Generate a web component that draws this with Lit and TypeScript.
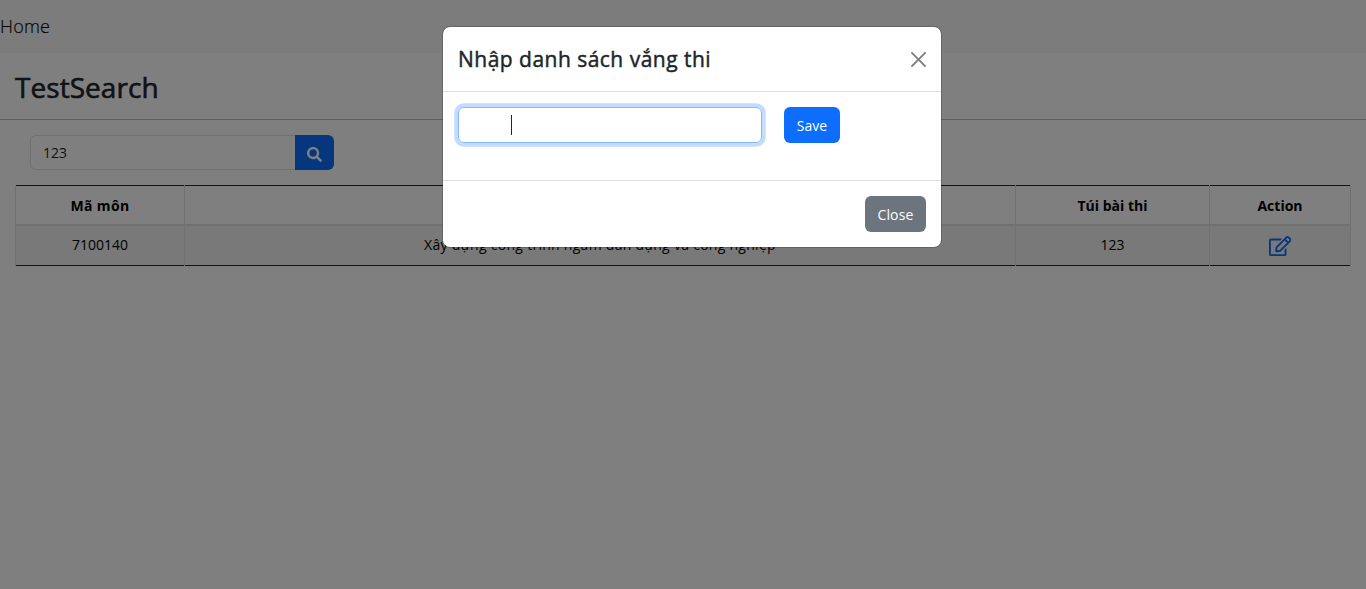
import { LitElement, html, css } from "lit";
import { customElement, state } from "lit/decorators.js";

interface Row {
  code: string;
  name: string;
  bag: string;
}

@customElement("app-root")
export class AppRoot extends LitElement {
  @state() private keyword = "123";
  @state() private rows: Row[] = [
    { code: "7100140", name: "Xây dựng công trình ngầm dân dụng và công nghiệp", bag: "123" },
  ];

  static styles = css`
    :host {
      display: block;
      position: relative;
      height: 589px;
      overflow: hidden;
      background: #fff;
      color: #212529;
      font: 14px/22px "Open Sans", "Noto Sans", sans-serif;
    }
    * { box-sizing: border-box; }
    .nav {
      display: flex;
      align-items: center;
      height: 53px;
      padding-bottom: 2px;
      background: #f8f9fa;
      font-size: 18px;
      font-weight: 300;
      letter-spacing: 0.2px;
      color: #000;
      -webkit-text-stroke: 0.15px currentColor;
    }
    .title {
      display: flex;
      align-items: center;
      height: 67px;
      padding: 2px 0 0 15px;
      border-bottom: 1px solid #bcbdbe;
      margin: 0;
      font-size: 28px;
      line-height: 34px;
      font-weight: 500;
      letter-spacing: 0.05px;
      -webkit-text-stroke: 0.6px currentColor;
    }
    .title span, .heading span { display: block; }
    .search {
      display: flex;
      width: 304px;
      height: 35px;
      margin: 15px 0 15px 30px;
    }
    .field {
      flex: 1;
      display: flex;
      align-items: center;
      padding: 0 12px;
      border: 1px solid #dee2e6;
      border-right: 0;
      border-radius: 6px 0 0 6px;
    }
    .go {
      display: flex;
      align-items: center;
      justify-content: center;
      width: 39px;
      padding: 3px 0 0;
      border: 0;
      border-radius: 0 6px 6px 0;
      background: #0d6efd;
      color: #fff;
    }
    .grid {
      display: grid;
      grid-template-columns: 169px 831px 194px 142px;
      width: 1336px;
      margin-left: 15px;
      color: #000;
      text-align: center;
    }
    .cell {
      display: flex;
      align-items: center;
      justify-content: center;
      border-left: 1px solid #dee2e6;
    }
    .cell:nth-child(4n) { border-right: 1px solid #dee2e6; }
    .head {
      height: 41px;
      font-weight: 700;
      background: linear-gradient(#212529, #212529) 0 0 / 100% 1px no-repeat,
        linear-gradient(#dee2e6, #dee2e6) 0 100% / 100% 2px no-repeat;
      background-origin: padding-box;
      background-clip: padding-box;
    }
    .body {
      height: 40px;
      padding-bottom: 2px;
      background: linear-gradient(#212529, #212529) 0 100% / 100% 1px no-repeat, #f2f2f2;
      background-clip: padding-box;
    }
    .edit { display: flex; padding-top: 2px; color: #0d6efd; }
    .backdrop {
      position: absolute;
      inset: 0;
      background: rgba(0, 0, 0, 0.5);
    }
    .modal {
      position: absolute;
      left: 442px;
      top: 26px;
      width: 500px;
      height: 222px;
      display: flex;
      flex-direction: column;
      border: 1px solid rgba(0, 0, 0, 0.175);
      border-radius: 8px;
      background: #fff;
      background-clip: padding-box;
    }
    .top {
      display: flex;
      align-items: center;
      justify-content: space-between;
      height: 65px;
      padding: 0 15px;
      border-bottom: 1px solid #dee2e6;
    }
    .heading {
      margin: 0;
      font-size: 21px;
      line-height: 34px;
      font-weight: 500;
      letter-spacing: 0.48px;
      -webkit-text-stroke: 0.45px currentColor;
    }
    .dismiss { display: flex; color: #000; opacity: 0.5; }
    .content {
      display: flex;
      flex: 1;
      align-items: flex-start;
      gap: 21.5px;
      padding: 15px;
    }
    .entry {
      display: flex;
      align-items: center;
      width: 304.4px;
      height: 36px;
      padding-left: 52px;
      border: 1px solid #86b7fe;
      border-radius: 6px;
      box-shadow: 0 0 0 3.75px rgba(13, 110, 253, 0.25);
    }
    .caret { width: 1px; height: 20px; background: #212529; }
    .btn {
      display: flex;
      align-items: center;
      justify-content: center;
      height: 36px;
      padding: 2px 0 0;
      border: 0;
      border-radius: 6px;
      color: #fff;
      font: inherit;
    }
    .save { width: 56px; background: #0d6efd; }
    .close { width: 61px; background: #6c757d; letter-spacing: 0.15px; }
    .foot {
      display: flex;
      justify-content: flex-end;
      height: 67px;
      padding: 15px;
      border-top: 1px solid #dee2e6;
    }
    .name { letter-spacing: 0.28px; }
    .code-head { letter-spacing: 0.35px; }
  `;

  private renderRow(r: Row) {
    return html`
      <div class="cell body"><span>${r.code}</span></div>
      <div class="cell body"><span class="name">${r.name}</span></div>
      <div class="cell body"><span>${r.bag}</span></div>
      <div class="cell body">
        <span class="edit">
          <svg width="22.5" height="20" viewBox="0 0 576 512" fill="currentColor">
            <path d="M402.3 344.9l32-32c5-5 13.7-1.5 13.7 5.7V464c0 26.5-21.5 48-48 48H48c-26.5 0-48-21.5-48-48V112c0-26.5 21.5-48 48-48h273.5c7.1 0 10.7 8.6 5.7 13.7l-32 32c-1.5 1.5-3.5 2.3-5.7 2.3H48v352h352V350.5c0-2.1.8-4.1 2.3-5.6zm156.6-201.8L296.3 405.7l-90.4 10c-26.2 2.9-48.5-19.2-45.6-45.6l10-90.4L432.9 17.1c22.9-22.9 59.9-22.9 82.7 0l43.2 43.2c22.9 22.9 22.9 60 .1 82.8zM460.1 174L402 115.9 216.2 301.8l-7.3 65.3 65.3-7.3L460.1 174zm64.8-79.7l-43.2-43.2c-4.1-4.1-10.8-4.1-14.8 0L436 82l58.1 58.1 30.9-30.9c4-4.2 4-10.8-.1-14.9z"></path>
          </svg>
        </span>
      </div>
    `;
  }

  render() {
    return html`
      <nav class="nav"><span>Home</span></nav>
      <h2 class="title"><span>TestSearch</span></h2>
      <div class="search">
        <div class="field"><span>${this.keyword}</span></div>
        <button class="go" aria-label="Search">
          <svg width="15" height="15" viewBox="0 0 512 512" fill="currentColor">
            <path d="M505 442.7L405.3 343c-4.5-4.5-10.6-7-17-7H372c27.6-35.3 44-79.7 44-128C416 93.1 322.9 0 208 0S0 93.1 0 208s93.1 208 208 208c48.3 0 92.7-16.4 128-44v16.3c0 6.4 2.5 12.5 7 17l99.7 99.7c9.4 9.4 24.6 9.4 33.9 0l28.3-28.3c9.4-9.4 9.4-24.6.1-34zM208 336c-70.7 0-128-57.2-128-128 0-70.7 57.2-128 128-128 70.7 0 128 57.2 128 128 0 70.7-57.2 128-128 128z"></path>
          </svg>
        </button>
      </div>
      <div class="grid">
        <div class="cell head"><span class="code-head">Mã môn</span></div>
        <div class="cell head"></div>
        <div class="cell head"><span>Túi bài thi</span></div>
        <div class="cell head"><span>Action</span></div>
        ${this.rows.map((r) => this.renderRow(r))}
      </div>
      <div class="backdrop"></div>
      <div class="modal" role="dialog">
        <div class="top">
          <h5 class="heading"><span>Nhập danh sách vắng thi</span></h5>
          <span class="dismiss">
            <svg width="15" height="15" viewBox="0 0 16 16" fill="currentColor">
              <path d="M.293.293a1 1 0 0 1 1.414 0L8 6.586 14.293.293a1 1 0 1 1 1.414 1.414L9.414 8l6.293 6.293a1 1 0 0 1-1.414 1.414L8 9.414l-6.293 6.293a1 1 0 0 1-1.414-1.414L6.586 8 .293 1.707a1 1 0 0 1 0-1.414z"></path>
            </svg>
          </span>
        </div>
        <div class="content">
          <div class="entry"><span class="caret"></span></div>
          <button class="btn save"><span>Save</span></button>
        </div>
        <div class="foot">
          <button class="btn close"><span>Close</span></button>
        </div>
      </div>
    `;
  }
}
